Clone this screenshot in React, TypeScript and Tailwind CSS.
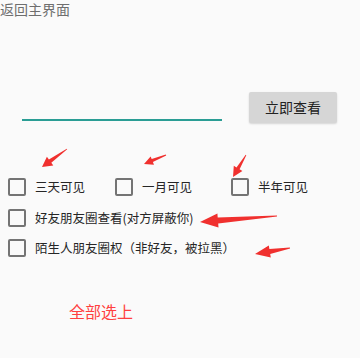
import React from 'react';

type Pt = [number, number];

// tapered red annotation arrow, tail -> tip
function arrowPoints(tail: Pt, tip: Pt, headLen = 9, headHalf = 5, shaftHalf = 2): string {
  const dx = tip[0] - tail[0];
  const dy = tip[1] - tail[1];
  const len = Math.hypot(dx, dy);
  const ux = dx / len;
  const uy = dy / len;
  const nx = -uy;
  const ny = ux;
  const bx = tip[0] - ux * headLen;
  const by = tip[1] - uy * headLen;
  const pts: Pt[] = [
    [tail[0] + nx * 0.4, tail[1] + ny * 0.4],
    [bx + nx * shaftHalf, by + ny * shaftHalf],
    [bx + nx * headHalf, by + ny * headHalf],
    tip,
    [bx - nx * headHalf, by - ny * headHalf],
    [bx - nx * shaftHalf, by - ny * shaftHalf],
    [tail[0] - nx * 0.4, tail[1] - ny * 0.4],
  ];
  return pts.map((p) => `${p[0].toFixed(1)},${p[1].toFixed(1)}`).join(' ');
}

const arrows: { tail: Pt; tip: Pt; hl?: number; hh?: number; sh?: number }[] = [
  { tail: [67, 149], tip: [42, 167], hl: 10, hh: 5.5, sh: 2 },
  { tail: [166, 155], tip: [144, 164], hl: 9, hh: 4.5, sh: 1.6 },
  { tail: [246, 155], tip: [233, 177], hl: 10, hh: 5, sh: 1.8 },
  { tail: [277, 216], tip: [200, 222], hl: 18, hh: 7, sh: 3 },
  { tail: [290, 248], tip: [255, 254], hl: 15, hh: 6, sh: 2.5 },
];

function CheckItem({ label, className = '' }: { label: string; className?: string }) {
  return (
    <div className={`flex items-center ${className}`}>
      <span className="h-[18px] w-[18px] shrink-0 rounded-[2px] border-2 border-[#747474]" />
      <span className="ml-[9px] whitespace-nowrap text-[12.5px] leading-[18px] text-[#262626]">{label}</span>
    </div>
  );
}

export default function App() {
  return (
    <div className="relative h-[358px] w-[360px] overflow-hidden bg-[#fafafa] font-['Noto_Sans_CJK_SC',sans-serif]">
      <div className="text-[14px] leading-[18px] text-[#6e6e6e]">返回主界面</div>

      <div className="mt-[74px] flex h-[31px]">
        <div className="ml-[22px] mt-[27px] h-[2px] w-[200px] bg-[#2a9d94]" />
        <button className="ml-[27px] h-[31px] w-[88px] rounded-[2px] bg-[#d6d6d6] text-[14px] text-[#222] shadow-[0_1px_2px_rgba(0,0,0,0.15)]">
          立即查看
        </button>
      </div>

      <div className="mt-[55px] flex pl-[8px]">
        <CheckItem label="三天可见" className="w-[107px]" />
        <CheckItem label="一月可见" className="w-[116px]" />
        <CheckItem label="半年可见" />
      </div>
      <div className="mt-[13px] pl-[8px]">
        <CheckItem label="好友朋友圈查看(对方屏蔽你)" />
      </div>
      <div className="mt-[12px] pl-[8px]">
        <CheckItem label="陌生人朋友圈权（非好友，被拉黑）" />
      </div>

      <div className="ml-[69px] mt-[44px] text-[16px] leading-[20px] text-[#ff4040]">全部选上</div>

      <svg className="pointer-events-none absolute left-0 top-0" width="360" height="358">
        {arrows.map((a, i) => (
          <polygon key={i} points={arrowPoints(a.tail, a.tip, a.hl, a.hh, a.sh)} fill="#f0302e" />
        ))}
      </svg>
    </div>
  );
}
